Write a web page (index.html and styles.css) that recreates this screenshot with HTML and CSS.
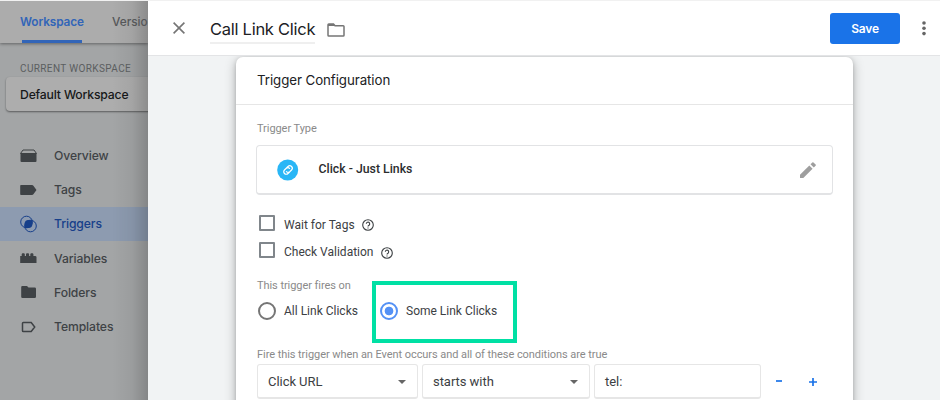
FILE: index.html
```html
<!DOCTYPE html>
<html lang="en">
<head>
    <meta charset="UTF-8">
    <meta name="viewport" content="width=device-width, initial-scale=1.0">
    <title>Call Link Click</title>
    <link rel="stylesheet" href="styles.css">
</head>
<body>
    <aside class="sidebar">
        <div class="tabs">
            <div class="tab active"><span class="t-workspace">Workspace</span></div>
            <div class="tab">Versio</div>
        </div>
        <div class="workspace-label">CURRENT WORKSPACE</div>
        <div class="workspace-box">Default Workspace</div>
        <nav class="nav">
            <a class="nav-item">
                <svg width="18" height="14" viewBox="0 0 18 14"><path d="M3 1h11l2.500 3.500h-16z" fill="none" stroke="currentColor" stroke-width="1"/><path d="M.5 4.500h16V12a1 1 0 0 1-1 1h-14a1 1 0 0 1-1-1z" fill="currentColor"/></svg>
                Overview
            </a>
            <a class="nav-item">
                <svg width="18" height="14" viewBox="0 0 18 14"><path d="M1 2h11c.6 0 1 .2 1.400.7L16.500 7l-3.100 4.300c-.4.5-.8.7-1.400.7H1a.8.8 0 0 1-.8-.8V2.800A.8.8 0 0 1 1 2z" fill="currentColor"/></svg>
                Tags
            </a>
            <a class="nav-item selected">
                <svg width="18" height="18" viewBox="0 0 18 18"><circle cx="6.500" cy="7" r="5.800" fill="none" stroke="currentColor"/><circle cx="10.500" cy="11" r="5.800" fill="none" stroke="currentColor"/><path d="M12.200 5.500A5.800 5.800 0 0 1 5 12.700 5.800 5.800 0 0 1 12.200 5.500z" fill="currentColor"/><circle cx="8.500" cy="9" r="3.900" fill="currentColor"/></svg>
                Triggers
            </a>
            <a class="nav-item">
                <svg width="18" height="14" viewBox="0 0 18 14"><path d="M.2 5h1.500V3l.7-.8h1.700l.7.800v2h1.200V3l.7-.8h1.700l.7.800v2h1.200V3l.7-.8h1.700l.7.800v2h2.100l1 .8V12H.2z" fill="currentColor"/></svg>
                Variables
            </a>
            <a class="nav-item">
                <svg width="18" height="14" viewBox="0 0 18 14"><path d="M2.300 1h4.700l1.500 1.500h6.200A1.300 1.300 0 0 1 16 3.800v8A1.300 1.300 0 0 1 14.700 13H2.500a1.300 1.300 0 0 1-1.300-1.300V2.200A1.200 1.200 0 0 1 2.300 1z" fill="currentColor"/></svg>
                Folders
            </a>
            <a class="nav-item">
                <svg width="18" height="14" viewBox="0 0 18 14"><path d="M3.300 2.500h7.900l3.500 4.500-3.500 4.500H3.300a.8.8 0 0 1-.8-.8V3.300a.8.8 0 0 1 .8-.8z" fill="none" stroke="currentColor" stroke-width="1.500"/></svg>
                Templates
            </a>
        </nav>
    </aside>

    <main class="panel">
        <header class="panel-header">
            <svg class="close" width="12" height="12" viewBox="0 0 12 12"><path d="M.6.6l10.800 10.800M11.400.6L.6 11.400" stroke="#757575" stroke-width="1.600"/></svg>
            <h1 class="title">Call Link Click</h1>
            <svg class="folder" width="18" height="14" viewBox="0 0 18 14"><path d="M1.800 1h4.700l1.500 1.700h8.200a.8.8 0 0 1 .8.8v8.700a.8.8 0 0 1-.8.8H1.800a.8.8 0 0 1-.8-.8V1.800A.8.8 0 0 1 1.800 1z" fill="none" stroke="#757575" stroke-width="1.500"/><path d="M1 1h5.500l1.500 2H1z" fill="#757575"/></svg>
            <button class="save">Save</button>
            <svg class="more" width="4" height="15" viewBox="0 0 4 15" fill="#666"><circle cx="2" cy="2" r="1.800"/><circle cx="2" cy="7.300" r="1.800"/><circle cx="2" cy="12.600" r="1.800"/></svg>
        </header>

        <div class="panel-body">
            <section class="card">
                <h2 class="card-title">Trigger Configuration</h2>
                <div class="card-body">
                    <div class="label type-label">Trigger Type</div>
                    <div class="type-box">
                        <svg width="22" height="22" viewBox="0 0 22 22"><circle cx="10.700" cy="11" r="10.500" fill="#29b6f6"/><g transform="rotate(-45 11 11)" fill="none" stroke="#fff" stroke-width="1.200" stroke-linecap="round"><path d="M10 13.500H8.500a2.500 2.500 0 0 1 0-5H11a2.500 2.500 0 0 1 2.300 2.500"/><path d="M12 8.500h1.500a2.500 2.500 0 0 1 0 5H11A2.500 2.500 0 0 1 8.700 11"/></g></svg>
                        <span class="type-name">Click - Just Links</span>
                        <svg class="pencil" width="16" height="16" viewBox="0 0 16 16" fill="#9e9e9e"><path d="M0 12.700V16h3.300L12.600 6.700 9.300 3.400z"/><path d="M15.600 3.700a.9.9 0 0 0 0-1.200L13.500.4a.9.9 0 0 0-1.200 0l-1.800 1.800 3.300 3.300z"/></svg>
                    </div>

                    <div class="check-row">
                        <span class="checkbox"></span>
                        <span>Wait for Tags</span>
                        <svg class="help" width="12" height="12" viewBox="0 0 12 12"><circle cx="6" cy="6" r="5.300"/><path d="M4.300 4.800a1.700 1.700 0 1 1 2.700 1.400Q6 6.800 6 7.600M6 8.500v1.100"/></svg>
                    </div>
                    <div class="check-row">
                        <span class="checkbox"></span>
                        <span>Check Validation</span>
                        <svg class="help" width="12" height="12" viewBox="0 0 12 12"><circle cx="6" cy="6" r="5.300"/><path d="M4.300 4.800a1.700 1.700 0 1 1 2.700 1.400Q6 6.800 6 7.600M6 8.500v1.100"/></svg>
                    </div>

                    <div class="label fires-label">This trigger fires on</div>
                    <div class="radios">
                        <div class="radio-row">
                            <span class="radio"></span>
                            <span>All Link Clicks</span>
                        </div>
                        <div class="radio-row highlight">
                            <span class="radio checked"></span>
                            <span>Some Link Clicks</span>
                        </div>
                    </div>

                    <div class="label cond-label">Fire this trigger when an Event occurs and all of these conditions are true</div>
                    <div class="conditions">
                        <div class="field select">Click URL</div>
                        <div class="field select">starts with</div>
                        <div class="field">tel:</div>
                        <svg width="8" height="10" viewBox="0 0 8 10"><path d="M0 4h6" stroke="#1a73e8" stroke-width="1.700"/></svg>
                        <svg class="plus" width="8" height="10" viewBox="0 0 8 10"><path d="M0 5h8M4 1v8" stroke="#1a73e8" stroke-width="1.700"/></svg>
                    </div>
                </div>
            </section>
        </div>
    </main>
</body>
</html>
```
FILE: styles.css
```css
* {
    box-sizing: border-box;
}
body {
    margin: 0;
    width: 940px;
    height: 400px;
    overflow: hidden;
    display: grid;
    grid-template-columns: 148px 792px;
    font-family: Roboto, sans-serif;
    font-size: 13px;
    color: #3c4043;
    border-top: 1px solid #f1f1f1;
}
svg {
    display: block;
    flex: none;
}

/* Dimmed page behind the panel */
.sidebar {
    height: 399px;
    overflow: hidden;
    background: linear-gradient(to right, transparent 112px, rgba(0, 0, 0, 0.05) 132px, rgba(0, 0, 0, 0.19)), #a3a5a6;
    font-family: Inter, sans-serif;
    white-space: nowrap;
}
.tabs {
    display: flex;
    gap: 28px;
    height: 42px;
    padding-left: 20px;
    background: linear-gradient(to right, transparent 112px, rgba(0, 0, 0, 0.05) 132px, rgba(0, 0, 0, 0.19)), #acacac;
    box-shadow: 0 1px 3px rgba(0, 0, 0, 0.4);
    font-size: 11.8px;
    font-weight: 500;
    line-height: 43px;
    color: #555759;
}
.tab.active {
    width: 64px;
    color: #3265b8;
    background: linear-gradient(#3265b8, #3265b8) 2px bottom / 60px 3px no-repeat;
}
.t-workspace {
    font-weight: 600;
    letter-spacing: -0.1px;
}
.workspace-label {
    margin: 18px 0 0 20px;
    height: 16px;
    font-family: Roboto, sans-serif;
    font-size: 10px;
    line-height: 16px;
    letter-spacing: 0.38px;
    color: #5b5e60;
}
.workspace-box {
    margin-left: 6px;
    width: 160px;
    height: 34px;
    padding-left: 14px;
    border-radius: 4px;
    background: linear-gradient(to right, transparent 106px, rgba(0, 0, 0, 0.05) 126px, rgba(0, 0, 0, 0.19) 142px), #adadad;
    box-shadow: 0 1px 2px rgba(0, 0, 0, 0.45);
    font-size: 12.2px;
    font-weight: 500;
    line-height: 35px;
    letter-spacing: -0.17px;
    color: #161819;
}
.nav {
    margin-top: 27.5px;
}
.nav-item {
    display: flex;
    align-items: center;
    gap: 16px;
    height: 34.2px;
    padding-left: 20px;
    font-size: 12.2px;
    font-weight: 500;
    letter-spacing: -0.1px;
    color: #3e4245;
}
.nav-item.selected {
    background: linear-gradient(to right, transparent 112px, rgba(0, 0, 0, 0.05) 132px, rgba(0, 0, 0, 0.19)), #8d9bb0;
    color: #173f8a;
}

/* Slide-in panel */
.panel {
    display: flex;
    flex-direction: column;
    height: 399px;
    background: #f1f3f4;
}
.panel-header {
    display: flex;
    align-items: center;
    flex: none;
    height: 55px;
    padding: 0 14px 0 25px;
    background: #fff;
    border-bottom: 1px solid #e3e4e6;
}
.title {
    margin: 3px 12px 0 25px;
    width: 105px;
    height: 29px;
    border-bottom: 2px solid #efefef;
    font-family: Inter, sans-serif;
    font-size: 16.5px;
    font-weight: 400;
    line-height: 28px;
    letter-spacing: -0.27px;
    white-space: nowrap;
    color: #202124;
}
.folder {
    margin-top: 3px;
}
.save {
    margin-left: auto;
    width: 70px;
    height: 31px;
    padding: 0;
    border: none;
    border-radius: 3px;
    background: #1a73e8;
    font-family: Inter, sans-serif;
    font-size: 12px;
    font-weight: 600;
    letter-spacing: -0.2px;
    color: #fff;
}
.more {
    margin-left: 22px;
}
.panel-body {
    flex: 1;
    min-height: 0;
    overflow: hidden;
    padding: 1px 0 0 88px;
}
.card {
    width: 617px;
    height: 360px;
    border-radius: 7px;
    background: #fff;
    box-shadow: 0 3px 12px rgba(0, 0, 0, 0.28), 0 1px 4px rgba(0, 0, 0, 0.15);
}
.card-title {
    margin: 0;
    height: 48px;
    padding-left: 21px;
    border-bottom: 1px solid #e6e6e6;
    font-family: Inter, sans-serif;
    font-size: 13.3px;
    font-weight: 400;
    line-height: 47px;
    letter-spacing: -0.07px;
    color: #202124;
}
.card-body {
    padding-left: 20px;
}
.label {
    margin-left: 1px;
    height: 16px;
    font-size: 11px;
    line-height: 16px;
    letter-spacing: -0.06px;
    color: #8a8a8a;
}
.type-label {
    margin-top: 16px;
}
.type-box {
    display: flex;
    align-items: center;
    width: 577px;
    height: 50px;
    margin: 8px 0 16px;
    padding: 0 16px 0 20px;
    border: 1px solid #e2e3e5;
    border-bottom-width: 2px;
    border-radius: 4px;
}
.type-name {
    margin: -2px auto 0 19.5px;
    font-size: 12.3px;
    font-weight: 500;
    color: #2b2c2e;
}
.check-row,
.radio-row {
    display: flex;
    align-items: center;
    height: 27.5px;
    font-size: 12px;
    white-space: nowrap;
}
.check-row {
    padding-left: 3px;
}
.checkbox {
    width: 16px;
    height: 16px;
    margin: -4px 9px 0 0;
    border: 2px solid #80868b;
    border-radius: 1px;
}
.help {
    margin: 1px 0 0 7.5px;
    fill: none;
    stroke: #3c4043;
    stroke-width: 1.1;
}
.fires-label {
    margin-top: 12px;
}
.radios {
    display: flex;
    height: 62px;
    margin-top: -13px;
}
.radio-row {
    height: 60px;
    width: 116px;
    padding-left: 2px;
}
.radio {
    width: 18px;
    height: 18px;
    margin-right: 8px;
    border: 2px solid #757575;
    border-radius: 50%;
}
.radio.checked {
    border-color: #5491f5;
    background: radial-gradient(circle, #5491f5 4px, transparent 4.7px);
}
.radio-row.highlight {
    width: 145px;
    height: 62px;
    padding: 0 0 2px 4px;
    border: 4px solid #00e0a4;
}
.cond-label {
    margin-top: 4px;
    white-space: nowrap;
}
.conditions {
    display: flex;
    align-items: center;
    gap: 4px;
    margin: 1px 0 0 1px;
}
.field {
    display: flex;
    align-items: center;
    justify-content: space-between;
    width: 167px;
    height: 35px;
    margin-right: 11px;
    padding: 0 11px 0 10px;
    border: 1px solid #e6e6e6;
    border-bottom-width: 2px;
    border-radius: 3px;
    font-size: 13px;
    letter-spacing: -0.05px;
}
.field.select {
    margin-right: 0;
    width: 168px;
}
.field.select:first-child {
    width: 161px;
}
.field.select::after {
    content: "";
    margin-top: 2px;
    border: 4px solid transparent;
    border-top-color: #666;
    border-bottom: none;
}
.plus {
    margin-left: 21px;
}
```
